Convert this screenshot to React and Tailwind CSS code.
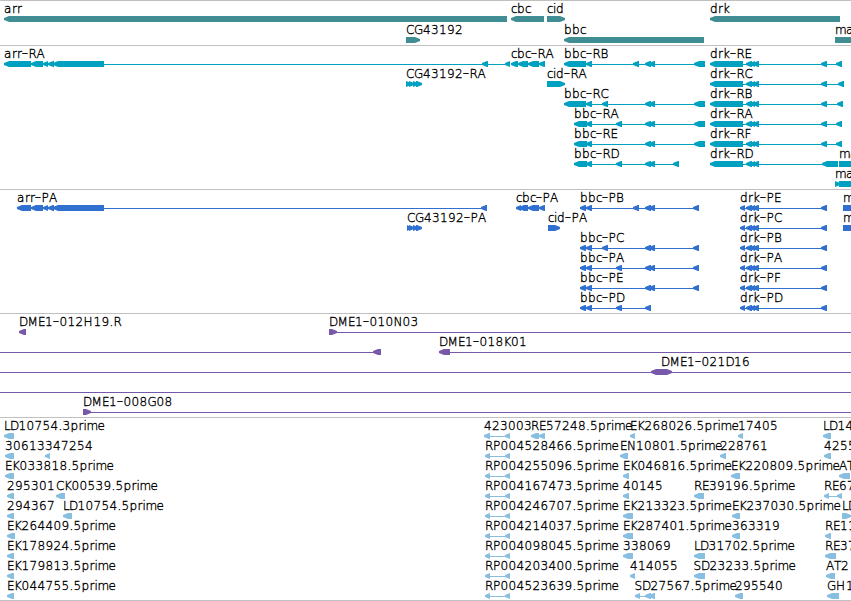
const TRACKS = [
  {
    name: 'genes',
    height: 45,
    pitch: 21,
    color: '#408e94',
    rows: [
      [
        { label: 'arr', x: 4, left: [[4, 507]] },
        { label: 'cbc', x: 511, left: [[511, 544]] },
        { label: 'cid', x: 547, right: [[547, 565]] },
        { label: 'drk', x: 710, left: [[710, 840]] },
      ],
      [
        { label: 'CG43192', x: 406, right: [[406, 420]] },
        { label: 'bbc', x: 564, left: [[564, 704]] },
        { label: 'mam', x: 835, right: [[835, 900]] },
      ],
    ],
  },
  {
    name: 'transcripts',
    height: 144,
    pitch: 20,
    color: '#00a0c0',
    rows: [
      [
        { label: 'arr-RA', x: 4, line: [4, 510], left: [[4, 31], [31, 43], [43, 48], [48, 54], [53, 104], [482, 488], [505, 510]] },
        { label: 'cbc-RA', x: 511, line: [511, 545], left: [[511, 518], [518, 528], [528, 539], [539, 545]] },
        { label: 'bbc-RB', x: 564, line: [564, 705], left: [[564, 586], [586, 592], [633, 639], [645, 651], [649, 655], [694, 705]] },
        { label: 'drk-RE', x: 710, line: [710, 842], left: [[710, 743], [746, 752], [750, 755], [753, 759], [821, 827], [836, 842]] },
      ],
      [
        { label: 'CG43192-RA', x: 406, line: [406, 422], right: [[406, 411], [409, 414], [413, 418], [416, 422]] },
        { label: 'cid-RA', x: 547, right: [[547, 565]] },
        { label: 'drk-RC', x: 710, line: [710, 844], left: [[710, 743], [746, 752], [750, 755], [753, 759], [821, 827], [838, 844]] },
      ],
      [
        { label: 'bbc-RC', x: 564, line: [564, 705], left: [[564, 586], [586, 592], [602, 608], [645, 651], [649, 655], [694, 705]] },
        { label: 'drk-RB', x: 710, line: [710, 843], left: [[710, 743], [746, 752], [750, 755], [753, 759], [821, 827], [837, 843]] },
      ],
      [
        { label: 'bbc-RA', x: 574, line: [574, 705], left: [[574, 587], [586, 592], [616, 622], [645, 651], [649, 655], [694, 705]] },
        { label: 'drk-RA', x: 710, line: [710, 842], left: [[710, 743], [746, 752], [750, 755], [753, 759], [821, 827], [836, 842]] },
      ],
      [
        { label: 'bbc-RE', x: 574, line: [574, 705], left: [[574, 587], [586, 592], [645, 651], [649, 655], [694, 705]] },
        { label: 'drk-RF', x: 710, line: [710, 842], left: [[710, 743], [746, 752], [750, 755], [753, 759], [821, 827], [836, 842]] },
      ],
      [
        { label: 'bbc-RD', x: 574, line: [574, 679], left: [[574, 587], [586, 592], [616, 622], [645, 651], [649, 655], [673, 679]] },
        { label: 'drk-RD', x: 710, line: [710, 838], left: [[710, 743], [746, 752], [750, 755], [753, 759], [822, 838]] },
        { label: 'mam', x: 839, right: [[839, 900]] },
      ],
      [{ label: 'mam', x: 835, right: [[835, 840], [839, 900]] }],
    ],
  },
  {
    name: 'proteins',
    height: 124,
    pitch: 20,
    color: '#3070d0',
    rows: [
      [
        { label: 'arr-PA', x: 17, line: [17, 487], left: [[17, 31], [31, 43], [43, 48], [48, 54], [53, 104], [481, 487]] },
        { label: 'cbc-PA', x: 516, line: [516, 545], left: [[516, 521], [519, 528], [528, 539], [539, 545]] },
        { label: 'bbc-PB', x: 580, line: [580, 699], left: [[580, 586], [586, 592], [633, 639], [645, 651], [649, 655], [693, 699]] },
        { label: 'drk-PE', x: 740, line: [740, 827], left: [[740, 745], [746, 752], [750, 755], [753, 759], [821, 827]] },
        { label: 'm', x: 843, right: [[843, 900]] },
      ],
      [
        { label: 'CG43192-PA', x: 407, line: [407, 422], right: [[407, 411], [409, 414], [413, 418], [416, 422]] },
        { label: 'cid-PA', x: 548, right: [[548, 560]] },
        { label: 'drk-PC', x: 740, line: [740, 827], left: [[740, 745], [746, 752], [750, 755], [753, 759], [821, 827]] },
        { label: 'm', x: 843, right: [[843, 900]] },
      ],
      [
        { label: 'bbc-PC', x: 580, line: [580, 699], left: [[580, 586], [586, 592], [602, 608], [645, 651], [649, 655], [693, 699]] },
        { label: 'drk-PB', x: 740, line: [740, 827], left: [[740, 745], [746, 752], [750, 755], [753, 759], [821, 827]] },
      ],
      [
        { label: 'bbc-PA', x: 580, line: [580, 699], left: [[580, 586], [586, 592], [616, 622], [645, 651], [649, 655], [693, 699]] },
        { label: 'drk-PA', x: 740, line: [740, 827], left: [[740, 745], [746, 752], [750, 755], [753, 759], [821, 827]] },
      ],
      [
        { label: 'bbc-PE', x: 580, line: [580, 699], left: [[580, 586], [586, 592], [645, 651], [649, 655], [693, 699]] },
        { label: 'drk-PF', x: 740, line: [740, 827], left: [[740, 745], [746, 752], [750, 755], [753, 759], [821, 827]] },
      ],
      [
        { label: 'bbc-PD', x: 580, line: [580, 651], left: [[580, 586], [586, 592], [616, 622], [645, 651]] },
        { label: 'drk-PD', x: 740, line: [740, 827], left: [[740, 745], [746, 752], [750, 755], [753, 759], [821, 827]] },
      ],
    ],
  },
  {
    name: 'clones',
    height: 104,
    pitch: 20,
    color: '#7858a8',
    rows: [
      [
        { label: 'DME1-012H19.R', x: 19, left: [[19, 26]] },
        { label: 'DME1-010N03', x: 329, line: [329, 851], right: [[329, 337]] },
      ],
      [
        { line: [0, 381], left: [[373, 381]] },
        { label: 'DME1-018K01', x: 439, line: [439, 851], left: [[439, 450]] },
      ],
      [{ label: 'DME1-021D16', x: 661, line: [0, 851], left: [[651, 662]], right: [[661, 672]] }],
      [{ line: [0, 851] }],
      [{ label: 'DME1-008G08', x: 83, line: [83, 851], right: [[83, 91]] }],
    ],
  },
  {
    name: 'ests',
    height: 183,
    pitch: 20,
    color: '#88bee0',
    rows: [
      [
        { label: 'LD10754.3prime', x: 4, left: [[4, 14]] },
        { label: '423003', x: 484, line: [484, 510], left: [[484, 490], [505, 510]] },
        { label: 'RE57248.5prime', x: 531, left: [[531, 539], [539, 545]] },
        { label: 'EK268026.5prime', x: 630, left: [[630, 635]] },
        { label: '17405', x: 738, left: [[738, 743]] },
        { label: 'LD14', x: 823, left: [[823, 831]] },
      ],
      [
        { label: '30613', x: 5, left: [[5, 14]] },
        { label: '347254', x: 45, left: [[45, 50]] },
        { label: 'RP004528466.5prime', x: 485, line: [485, 510], left: [[485, 490], [505, 510]] },
        { label: 'EN10801.5prime', x: 620, left: [[620, 628]] },
        { label: '228761', x: 720, left: [[720, 726]] },
        { label: '4255', x: 824, left: [[824, 831]] },
      ],
      [
        { label: 'EK033818.5prime', x: 5, left: [[5, 14]] },
        { label: 'RP004255096.5prime', x: 485, line: [485, 510], left: [[485, 490], [505, 510]] },
        { label: 'EK046816.5prime', x: 623, left: [[623, 629]] },
        { label: 'EK220809.5prime', x: 731, left: [[731, 740]] },
        { label: 'AT', x: 839, left: [[839, 850]] },
      ],
      [
        { label: '295301', x: 7, left: [[7, 14]] },
        { label: 'CK00539.5prime', x: 56, left: [[56, 65]] },
        { label: 'RP004167473.5prime', x: 485, line: [485, 510], left: [[485, 490], [505, 510]] },
        { label: '40145', x: 623, left: [[623, 629]] },
        { label: 'RE39196.5prime', x: 694, left: [[694, 704]] },
        { label: 'RE67', x: 824, line: [824, 842], left: [[824, 829], [837, 842]] },
      ],
      [
        { label: '294367', x: 7, left: [[7, 14]] },
        { label: 'LD10754.5prime', x: 63, left: [[63, 72]] },
        { label: 'RP004246707.5prime', x: 485, line: [485, 510], left: [[485, 490], [505, 510]] },
        { label: 'EK213323.5prime', x: 623, left: [[623, 633]] },
        { label: 'EK237030.5prime', x: 732, left: [[732, 740]] },
        { label: 'LD', x: 842, right: [[842, 851]] },
      ],
      [
        { label: 'EK264409.5prime', x: 7, left: [[7, 15]] },
        { label: 'RP004214037.5prime', x: 485, line: [485, 510], left: [[485, 490], [505, 510]] },
        { label: 'EK287401.5prime', x: 623, left: [[623, 633]] },
        { label: '363319', x: 732, left: [[732, 740]] },
        { label: 'RE11', x: 825, left: [[825, 831]] },
      ],
      [
        { label: 'EK178924.5prime', x: 7, left: [[7, 14]] },
        { label: 'RP004098045.5prime', x: 485, line: [485, 510], left: [[485, 490], [505, 510]] },
        { label: '338069', x: 623, left: [[623, 633]] },
        { label: 'LD31702.5prime', x: 694, left: [[694, 705]] },
        { label: 'RE37', x: 825, left: [[825, 836]] },
      ],
      [
        { label: 'EK179813.5prime', x: 7, left: [[7, 14]] },
        { label: 'RP004203400.5prime', x: 485, line: [485, 510], left: [[485, 490], [505, 510]] },
        { label: '414055', x: 630, left: [[630, 635]] },
        { label: 'SD23233.5prime', x: 693.5, left: [[694, 705]] },
        { label: 'AT2', x: 826, left: [[826, 835]] },
      ],
      [
        { label: 'EK044755.5prime', x: 7, left: [[7, 14]] },
        { label: 'RP004523639.5prime', x: 485, line: [485, 510], left: [[485, 490], [505, 510]] },
        { label: 'SD27567.5prime', x: 634.5, line: [635, 655], left: [[635, 640], [645, 651], [649, 655]] },
        { label: '295540', x: 735, left: [[735, 743]] },
        { label: 'GH1', x: 827, left: [[827, 839]] },
      ],
    ],
  },
];

// advance of each character, digits are all 8
const ADVANCE = {
  '-': 6.5, '.': 4, a: 8, b: 8, c: 6, d: 8, e: 7, i: 3, k: 7, m: 11, p: 8, r: 5,
  A: 8, B: 8, C: 8, D: 8.5, E: 7, F: 7, G: 9, H: 10, K: 7.5, L: 6, M: 10.5, N: 9, P: 7.5, R: 8, S: 7.5, T: 7,
};

// splits a label at its hyphens and gives every character an x
function labelRuns(label, x) {
  let pen = x;
  return label.split(/(-)/).map((text) => {
    const xs = [...text].map((ch) => {
      const at = pen;
      pen += ADVANCE[ch] ?? 8;
      return at;
    });
    return { text, xs };
  });
}

function Label({ text, x, y }) {
  return (
    <text fill="#000" stroke="#000" strokeWidth="0.35">
      {labelRuns(text, x).map((run, i) =>
        run.text === '-' ? (
          <tspan key={i} x={run.xs[0] - 0.5} y={y + 1.3} className="text-[19px]">-</tspan>
        ) : (
          <tspan key={i} x={run.xs.join(' ')} y={y}>{run.text}</tspan>
        )
      )}
    </text>
  );
}

function Exon({ start, end, y, dir }) {
  const head = Math.min(5, end - start);
  const points =
    dir === 'left'
      ? `${start},${y + 4} ${start},${y + 2} ${start + head},${y} ${end},${y} ${end},${y + 6} ${start + head},${y + 6}`
      : `${end},${y + 4} ${end},${y + 2} ${end - head},${y} ${start},${y} ${start},${y + 6} ${end - head},${y + 6}`;
  return <polygon points={points} />;
}

function Feature({ feature, y, color }) {
  const { label, x, line, left = [], right = [] } = feature;
  return (
    <g>
      <g fill={color}>
        {line && <rect x={line[0]} y={y + 3} width={line[1] - line[0]} height="1" />}
        {left.map(([s, e]) => <Exon key={s} start={s} end={e} y={y} dir="left" />)}
        {right.map(([s, e]) => <Exon key={s} start={s} end={e} y={y} dir="right" />)}
      </g>
      {label && <Label text={label} x={x} y={y - 3} />}
    </g>
  );
}

function Track({ track }) {
  return (
    <section className="border-t border-[#c0c0c0]">
      <svg
        width="851"
        height={track.height - 1}
        className="block font-['DejaVu_Sans',sans-serif] text-[12px] font-extralight"
        aria-label={track.name}
      >
        {track.rows.map((row, r) =>
          row.map((feature, i) => (
            <Feature key={`${r}-${i}`} feature={feature} y={15 + r * track.pitch} color={track.color} />
          ))
        )}
      </svg>
    </section>
  );
}

export default function App() {
  return (
    <main className="w-[851px] h-[601px] overflow-hidden bg-white border-b border-[#c0c0c0]">
      {TRACKS.map((track) => <Track key={track.name} track={track} />)}
    </main>
  );
}
